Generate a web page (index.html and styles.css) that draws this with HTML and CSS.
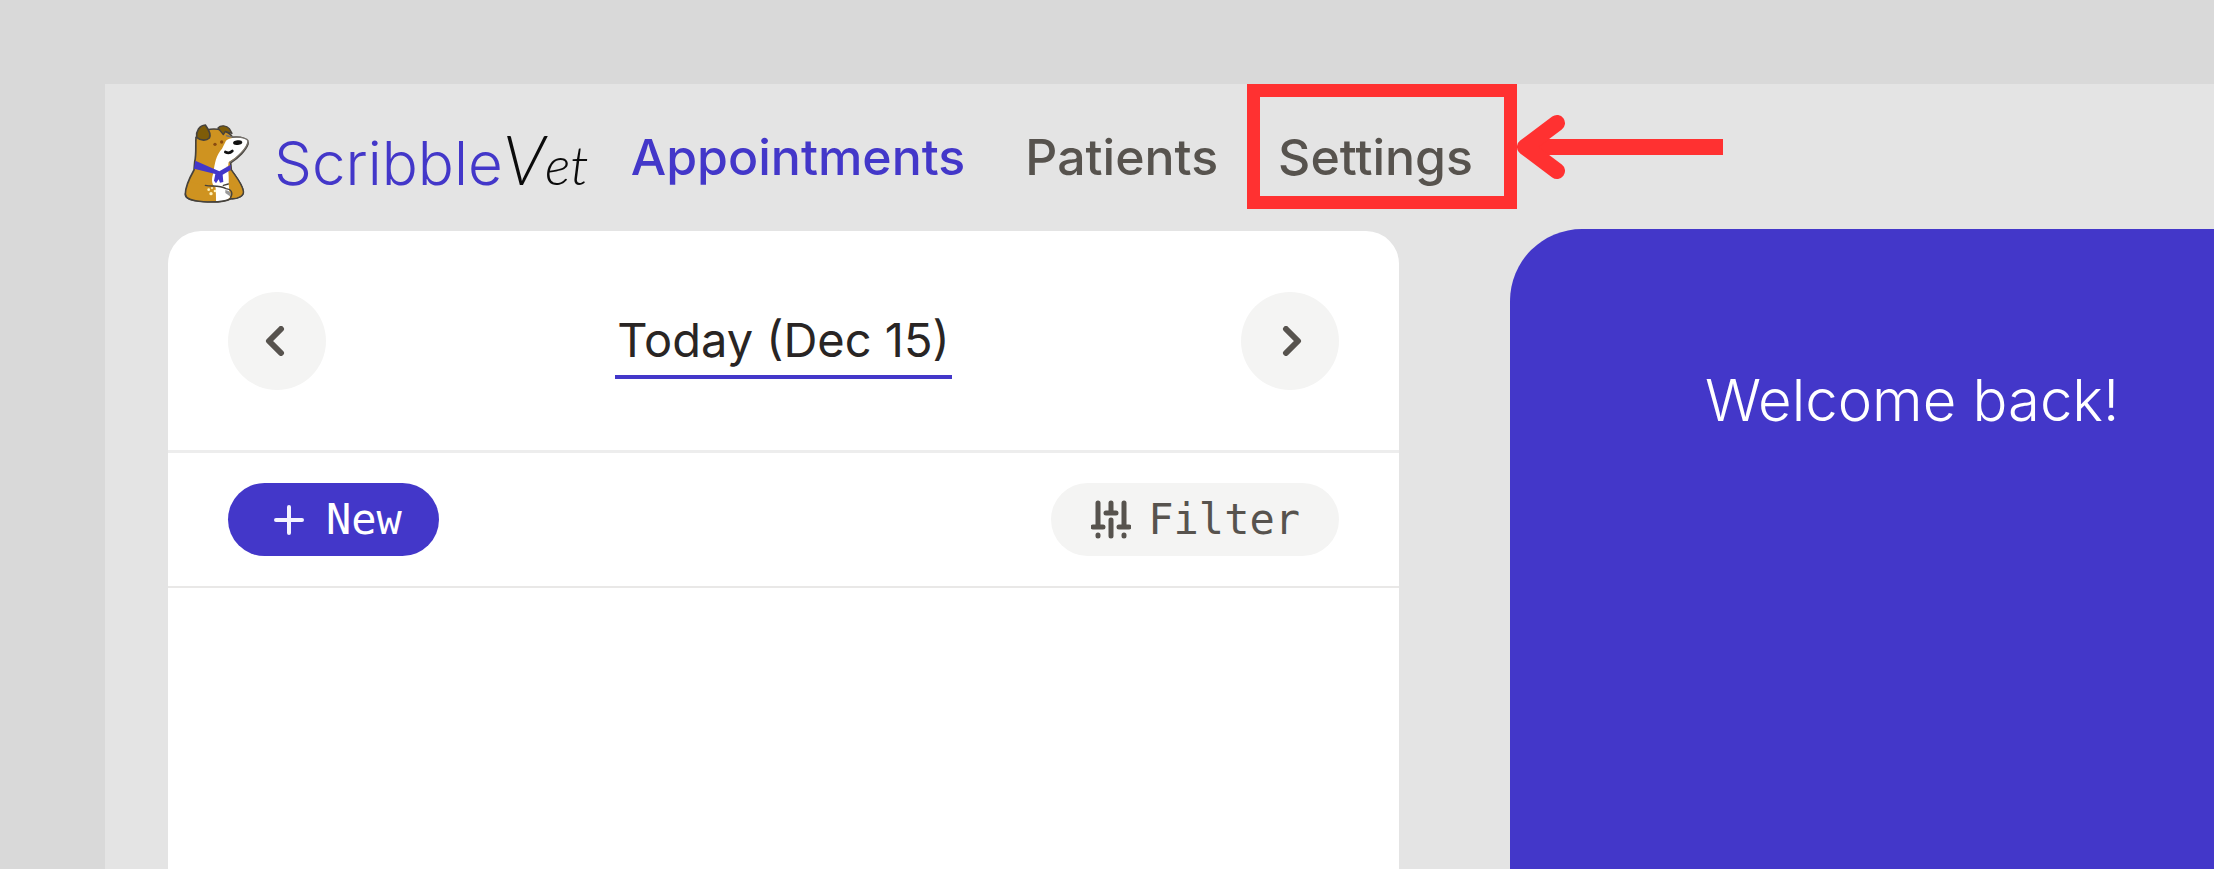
FILE: index.html
```html
<!DOCTYPE html>
<html lang="en">
<head>
<meta charset="utf-8">
<title>ScribbleVet</title>
<link rel="stylesheet" href="styles.css">
</head>
<body>
<div class="app">
  <header class="header">
    <a class="brand" href="#">
      <svg class="mascot" viewBox="0 0 270 315" aria-hidden="true">
        <path d="M78 82C76 110 80 130 74 156L72 180C58 205 46 235 46 252C46 266 62 272 100 275C135 277 165 276 182 266C205 268 222 256 220 244C217 222 196 198 184 180L182 158C205 144 228 120 234 102C236 86 216 80 188 82C176 62 140 52 110 60Z" fill="#cf9320" stroke="#46423c" stroke-width="5" stroke-linejoin="round"/>
        <path d="M168 92C182 80 228 78 233 94C232 114 198 146 176 156C172 175 178 195 176 222L180 262C170 274 150 274 138 273L136 232C124 224 124 205 130 190C134 160 138 136 156 116Z" fill="#fff"/>
        <path d="M168 76C184 86 226 76 234 92C234 114 198 146 178 158" fill="none" stroke="#77736e" stroke-width="4"/>
        <path d="M160 161C170 170 184 172 182 182L178 222C196 232 200 262 180 265C205 268 222 256 220 244C217 222 196 198 184 180Z" fill="#cf9320"/>
        <path d="M58 216C84 222 120 228 136 232L138 273C110 276 62 274 50 260Z" fill="#cf9320"/>
        <path d="M80 82C78 64 88 46 106 45C114 56 124 74 118 84C110 92 94 94 80 82Z" fill="#7e5c08" stroke="#46423c" stroke-width="5"/>
        <path d="M144 54C152 44 170 46 178 56L186 70L166 64L160 74Z" fill="#7e5c08" stroke="#46423c" stroke-width="4" stroke-linejoin="round"/>
        <ellipse cx="203" cy="98" rx="14" ry="7" fill="#111" transform="rotate(-8 203 98)"/>
        <path d="M166 126Q178 132 187 123" fill="none" stroke="#111" stroke-width="8" stroke-linecap="round"/>
        <g fill="#8a4b10"><circle cx="135" cy="103" r="5"/><circle cx="155" cy="96" r="5"/></g>
        <path d="M76 152L148 184L182 164L182 180L158 194L160 216L150 218L146 208L138 220L132 212L136 192L72 176Z" fill="#4337c9"/>
        <path d="M46 252C46 266 62 272 100 275C135 277 165 276 182 266C205 268 222 256 220 244C217 222 196 198 184 180M106 226C125 231 146 223 168 236C184 238 190 248 182 262M160 226L175 222" fill="none" stroke="#46423c" stroke-width="4" stroke-linecap="round"/>
        <path d="M166 240C182 243 185 252 180 259L166 249Z" fill="#999"/>
        <g fill="#fff2bc"><circle cx="116" cy="239" r="4"/><circle cx="126" cy="234" r="3"/><circle cx="123" cy="251" r="5"/><circle cx="135" cy="243" r="4"/></g>
      </svg>
      <span class="wordmark">Scribble<span class="wordmark-script"><span class="wordmark-initial">V</span>et</span></span>
    </a>
    <nav class="nav">
      <a class="nav-link active" href="#">Appointments</a>
      <a class="nav-link" href="#">Patients</a>
      <a class="nav-link highlighted" href="#">Settings
        <svg class="pointer" viewBox="0 0 206 66" aria-hidden="true"><path d="M206 33H12" fill="none" stroke="#ff3131" stroke-width="16"/><path d="M40 9L8 33L40 57" fill="none" stroke="#ff3131" stroke-width="16" stroke-linecap="round" stroke-linejoin="round"/></svg>
      </a>
    </nav>
  </header>
  <main class="main">
    <section class="schedule">
      <div class="date-bar">
        <button class="round" type="button" aria-label="Previous day"><svg class="chevron" viewBox="0 0 30 30"><path d="M19 3L7 15L19 27"/></svg></button>
        <button class="date" type="button">Today (Dec 15)</button>
        <button class="round" type="button" aria-label="Next day"><svg class="chevron" viewBox="0 0 30 30"><path d="M11 3L23 15L11 27"/></svg></button>
      </div>
      <div class="toolbar">
        <button class="pill primary" type="button"><svg class="plus" viewBox="0 0 32 32" aria-hidden="true"><path d="M16 3V29M3 16H29"/></svg>New</button>
        <button class="pill" type="button"><svg class="sliders" viewBox="0 0 40 40" aria-hidden="true"><path d="M7 3V27M2 27H12M7 35V36M20 3V13M15 13H25M20 20V36M33 3V27M28 27H38M33 35V36"/></svg>Filter</button>
      </div>
    </section>
    <section class="welcome"><h1 class="greeting">Welcome back!</h1></section>
  </main>
</div>
</body>
</html>
```
FILE: styles.css
```css
* { box-sizing: border-box; }
body { margin: 0; background: #d9d9d9; font-family: Inter, "Liberation Sans", sans-serif; }
button { border: 0; padding: 0; background: none; font: inherit; color: inherit; }
svg { display: block; flex: none; }

.app { display: flex; flex-direction: column; min-height: 100vh; padding: 84px 0 0 105px; background: #e4e4e4 content-box; }

.header { display: flex; align-items: center; height: 145px; padding-left: 65px; }
.brand { display: flex; align-items: center; gap: 14px; padding-top: 12px; color: #4337c9; text-decoration: none; }
.mascot { width: 90px; height: 105px; }
.wordmark { font-size: 60px; font-weight: 350; line-height: 80px; white-space: nowrap; }
.wordmark-script { font-family: Lato, "Liberation Sans", sans-serif; font-style: italic; font-weight: 300; font-size: 54px; line-height: 60px; color: #0b0b0b; }
.wordmark-initial { font-size: 70px; }
.nav { display: flex; gap: 60px; margin: 0 0 0 42px; }
.nav-link { position: relative; color: #57534e; font-size: 50px; font-weight: 500; line-height: 60px; text-decoration: none; white-space: nowrap; }
.active { color: #4337c9; }
.highlighted::before { content: ""; position: absolute; inset: -43px -44px -22px -31px; border: 13px solid #ff3131; }
.pointer { position: absolute; left: 100%; top: -13px; width: 206px; height: 66px; margin-left: 44px; }

.main { flex: 1; display: grid; grid-template-columns: 1231fr 704fr; gap: 111px; padding-left: 63px; }
.schedule { margin-top: 2px; border-radius: 33px 33px 0 0; background: #fff; }
.date-bar { display: flex; align-items: center; justify-content: space-between; height: 222px; padding: 0 60px; border-bottom: 3px solid #ededed; }
.round { display: flex; align-items: center; justify-content: center; width: 98px; height: 98px; border-radius: 50%; background: #f4f4f3; }
.chevron { width: 30px; height: 30px; fill: none; stroke: #57534e; stroke-width: 6; stroke-linecap: round; stroke-linejoin: round; }
.date { padding: 2px 2px 0; border-bottom: 4px solid #4337c9; color: #292524; font-size: 47px; line-height: 70px; }
.toolbar { display: flex; align-items: center; justify-content: space-between; height: 135px; padding: 0 60px; border-bottom: 2px solid #e9e8e7; }
.pill { display: flex; align-items: center; height: 73px; padding: 0 39px 0 40px; gap: 17px; border-radius: 37px; background: #f4f4f3; color: #57534e; font-family: "DejaVu Sans Mono", monospace; font-size: 42px; line-height: 50px; }
.primary { gap: 21px; padding: 0 37px 0 45px; background: #4337c9; color: #fff; }
.plus { width: 32px; height: 32px; fill: none; stroke: #f4f4ff; stroke-width: 4; stroke-linecap: round; }
.sliders { width: 40px; height: 40px; fill: none; stroke: #57534e; stroke-width: 5; stroke-linecap: round; }

.welcome { border-radius: 72px 0 0 0; background: #4337c9; }
.greeting { margin: 133px 0 0 195px; color: #fff; font-size: 58px; font-weight: 300; line-height: 76px; white-space: nowrap; }
```
